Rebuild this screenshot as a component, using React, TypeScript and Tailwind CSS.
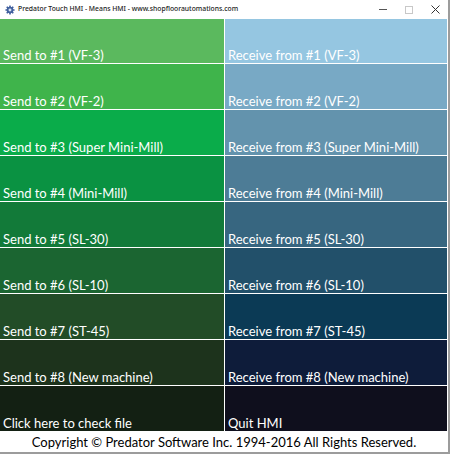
import React from "react";

const rows: { l: string; lc: string; r: string; rc: string }[] = [
  { l: "Send to #1 (VF-3)", lc: "bg-[#5bb95e]", r: "Receive from #1 (VF-3)", rc: "bg-[#95c6e1]" },
  { l: "Send to #2 (VF-2)", lc: "bg-[#3fb44b]", r: "Receive from #2 (VF-2)", rc: "bg-[#78a9c5]" },
  { l: "Send to #3 (Super Mini-Mill)", lc: "bg-[#0aac4a]", r: "Receive from #3 (Super Mini-Mill)", rc: "bg-[#6393ad]" },
  { l: "Send to #4 (Mini-Mill)", lc: "bg-[#0a9242]", r: "Receive from #4 (Mini-Mill)", rc: "bg-[#4d7c96]" },
  { l: "Send to #5 (SL-30)", lc: "bg-[#127a39]", r: "Receive from #5 (SL-30)", rc: "bg-[#376680]" },
  { l: "Send to #6 (SL-10)", lc: "bg-[#1b6531]", r: "Receive from #6 (SL-10)", rc: "bg-[#22506a]" },
  { l: "Send to #7 (ST-45)", lc: "bg-[#224c27]", r: "Receive from #7 (ST-45)", rc: "bg-[#0b3a55]" },
  { l: "Send to #8 (New machine)", lc: "bg-[#1d331c]", r: "Receive from #8 (New machine)", rc: "bg-[#0e1c3a]" },
  { l: "Click here to check file", lc: "bg-[#132013]", r: "Quit HMI", rc: "bg-[#0f0f1d]" },
];

const font = { fontFamily: "Lato, 'Open Sans', 'Liberation Sans', sans-serif" };

function Gear() {
  return (
    <svg width="10" height="10" viewBox="0 0 24 24" className="shrink-0">
      <g fill="#41609e">
        {Array.from({ length: 8 }).map((_, i) => (
          <rect key={i} x="10" y="1" width="4" height="6" rx="1" transform={`rotate(${i * 45} 12 12)`} />
        ))}
        <circle cx="12" cy="12" r="8" />
      </g>
      <circle cx="12" cy="12" r="3.5" fill="#dce6f5" />
    </svg>
  );
}

export default function App() {
  return (
    <div className="w-[450px] h-[454px] flex flex-col bg-white border-r-2 border-b-2 border-[#9c9c9c] overflow-hidden">
      <div className="h-[19px] flex items-center bg-white pl-[5px] shrink-0">
        <Gear />
        <span
          className="ml-[3px] text-[6.8px] font-medium text-[#222] leading-none"
          style={{ fontFamily: "'Noto Sans', 'Liberation Sans', sans-serif" }}
        >
          Predator Touch HMI - Means HMI - www.shopfloorautomations.com
        </span>
        <div className="ml-auto flex items-center h-full">
          <div className="w-[26px] flex justify-center">
            <div className="w-[8px] h-px bg-[#555]" />
          </div>
          <div className="w-[26px] flex justify-center">
            <div className="w-[8px] h-[8px] border border-[#c8c8c8]" />
          </div>
          <div className="w-[26px] flex justify-center">
            <svg width="9" height="9" viewBox="0 0 9 9">
              <path d="M0.5 0.5 L8.5 8.5 M8.5 0.5 L0.5 8.5" stroke="#333" strokeWidth="1" />
            </svg>
          </div>
        </div>
      </div>
      <div className="grid grid-cols-[224px_222px] grid-rows-[44px_repeat(8,45px)] gap-px pr-px bg-white shrink-0">
        {rows.map((r, i) => (
          <React.Fragment key={i}>
            <div className={`${r.lc} flex items-end pl-[3px] pb-[1px]`}>
              <span className="text-white text-[13px] leading-none" style={font}>
                {r.l}
              </span>
            </div>
            <div className={`${r.rc} flex items-end pl-[3px] pb-[1px]`}>
              <span className="text-white text-[13px] leading-none" style={font}>
                {r.r}
              </span>
            </div>
          </React.Fragment>
        ))}
      </div>
      <div className="flex-1 flex items-center justify-center bg-white">
        <span className="text-black text-[13px] leading-none pt-[2px]" style={font}>
          Copyright © Predator Software Inc. 1994-2016 All Rights Reserved.
        </span>
      </div>
    </div>
  );
}
